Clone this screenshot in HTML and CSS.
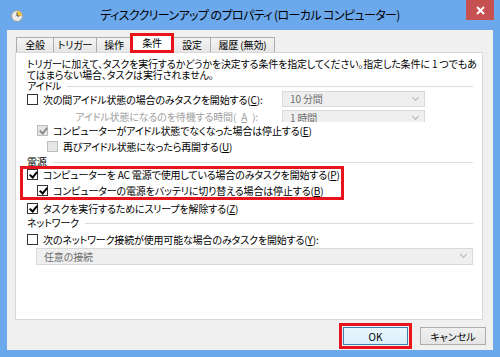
FILE: index.html
```html
<!DOCTYPE html>
<html lang="ja">
<head>
    <meta charset="UTF-8">
    <title>ディスククリーンアップ のプロパティ</title>
    <link rel="stylesheet" href="styles.css">
</head>
<body>
<div class="window">
    <div class="titlebar">
        <svg class="app-icon" width="12" height="12" viewBox="0 0 12 12">
            <circle cx="6" cy="6" r="5.5" fill="#ececec" stroke="#9c9c9c"/>
            <path d="M6 6 V1 A5 5 0 0 1 11 6 Z" fill="#f2c23a"/>
            <path d="M6 2.5 V6 H8.5" stroke="#555" fill="none"/>
        </svg>
        <div class="title">ディスククリーンアップ のプロパティ (ローカル コンピューター)</div>
        <div class="close">
            <svg width="9" height="9" viewBox="0 0 9 9"><path d="M1 1 L8 8 M8 1 L1 8" stroke="#fff" stroke-width="2"/></svg>
        </div>
    </div>

    <div class="client">
        <div class="tabs">
            <div class="tab">全般</div>
            <div class="tab">トリガー</div>
            <div class="tab">操作</div>
            <div class="tab active">条件</div>
            <div class="tab">設定</div>
            <div class="tab">履歴 (無効)</div>
        </div>

        <div class="panel">
            <p class="intro">トリガーに加えて、タスクを実行するかどうかを決定する条件を指定してください。指定した条件に 1 つでもあ<br>てはまらない場合、タスクは実行されません。</p>

            <div class="group">アイドル<span class="rule"></span></div>
            <div class="row">
                <div class="label-col">
                    <span class="cb"></span>
                    <span>次の間アイドル状態の場合のみタスクを開始する(<u>C</u>):</span>
                </div>
                <div class="combo">10 分間<span class="chev"></span></div>
            </div>
            <div class="row short">
                <div class="label-col right muted">アイドル状態になるのを待機する時間(<u>A</u>):</div>
                <div class="combo cut">1 時間<span class="chev"></span></div>
            </div>
            <div class="row indent1">
                <span class="cb off checked"></span>
                <span>コンピューターがアイドル状態でなくなった場合は停止する(<u>E</u>)</span>
            </div>
            <div class="row indent2">
                <span class="cb off"></span>
                <span>再びアイドル状態になったら再開する(<u>U</u>)</span>
            </div>

            <div class="group power">電源<span class="rule"></span></div>
            <div class="mark-box">
                <div class="row">
                    <span class="cb checked"></span>
                    <span>コンピューターを AC 電源で使用している場合のみタスクを開始する(<u>P</u>)</span>
                </div>
                <div class="row tall indent1">
                    <span class="cb checked"></span>
                    <span>コンピューターの電源をバッテリに切り替える場合は停止する(<u>B</u>)</span>
                </div>
            </div>
            <div class="row tall">
                <span class="cb checked"></span>
                <span>タスクを実行するためにスリープを解除する(<u>Z</u>)</span>
            </div>

            <div class="group">ネットワーク<span class="rule"></span></div>
            <div class="row net">
                <span class="cb"></span>
                <span>次のネットワーク接続が使用可能な場合のみタスクを開始する(<u>Y</u>):</span>
            </div>
            <div class="combo wide">任意の接続<span class="chev"></span></div>
        </div>

        <div class="footer">
            <div class="mark-ok"><button class="btn default">OK</button></div>
            <button class="btn">キャンセル</button>
        </div>
    </div>
</div>
</body>
</html>
```

FILE: styles.css
```css
* {
    box-sizing: border-box;
}
body {
    margin: 0;
    background-color: #6ca8ec;
    font-family: "Noto Sans CJK JP", sans-serif;
    font-feature-settings: "palt";
    font-size: 10px;
    letter-spacing: -0.15px;
    color: #000;
}
.window {
    width: 500px;
    height: 357px;
    display: flex;
    flex-direction: column;
}

/* title bar */
.titlebar {
    height: 30px;
    display: grid;
    grid-template-columns: 1fr auto 1fr;
    align-items: start;
}
.app-icon {
    margin: 10px 0 0 11px;
}
.title {
    font-size: 12px;
    letter-spacing: -0.6px;
    line-height: 30px;
    color: #000;
}
.close {
    justify-self: end;
    width: 28px;
    height: 20px;
    margin-right: 6px;
    background-color: #c75050;
    display: flex;
    align-items: center;
    justify-content: center;
}

/* client area */
.client {
    flex: 1;
    margin: 0 7px 7px;
    background-color: #f0f0f0;
    padding: 0 10px 0 8px;
    display: flex;
    flex-direction: column;
}
.tabs {
    height: 22px;
    display: flex;
    align-items: flex-end;
    padding-left: 1px;
}
.tab {
    height: 15px;
    line-height: 14px;
    text-align: center;
    border: 1px solid #acacac;
    border-bottom: none;
    margin-right: -1px;
    background: linear-gradient(#f4f4f4, #e6e6e6);
    white-space: nowrap;
}
.tab:nth-child(1) { width: 38px; }
.tab:nth-child(2) { width: 44px; }
.tab:nth-child(3) { width: 36px; }
.tab:nth-child(5) { width: 38px; }
.tab:nth-child(6) { width: 65px; }
.tab.active {
    width: 44px;
    height: 20px;
    line-height: 17px;
    margin: 0 -1px -1px -1px;
    background: #fff;
    position: relative;
    z-index: 1;
    outline: 3px solid #e8131b;
    outline-offset: -3px;
}
.panel {
    height: 268px;
    background-color: #fff;
    border: 1px solid #d9d9d9;
    padding: 5px 9px 0 11px;
}
.intro {
    margin: 0;
    line-height: 11px;
    white-space: nowrap;
}
.group {
    height: 11px;
    line-height: 11px;
    display: flex;
    align-items: center;
    gap: 6px;
}
.group .rule {
    flex: 1;
    border-top: 1px solid #dcdcdc;
    margin-top: 2px;
}
.group.power {
    margin-top: 2px;
}

/* rows */
.row {
    height: 16px;
    display: flex;
    align-items: center;
    gap: 5px;
    white-space: nowrap;
}
.row.tall {
    height: 17px;
}
.row:first-of-type {
    margin-top: 1px;
}
.row.short {
    height: 12px;
    margin-top: 3px;
    align-items: flex-start;
}
.row.short .label-col {
    line-height: 14px;
}
.row.indent1 {
    padding-left: 10px;
}
.row.indent2 {
    padding-left: 20px;
}
.row.net {
    margin-top: 3px;
}
.label-col {
    width: 250px;
    flex-shrink: 0;
    display: flex;
    align-items: center;
    gap: 5px;
}
.label-col.right {
    justify-content: flex-end;
    padding-right: 19px;
}
.muted {
    color: #a0a0a0;
}
u {
    text-decoration-thickness: 1px;
    text-underline-offset: 1px;
}

/* checkbox */
.cb {
    width: 11px;
    height: 11px;
    flex-shrink: 0;
    border: 1px solid #333;
    background-color: #fff;
    position: relative;
}
.cb.checked::after {
    content: "";
    position: absolute;
    left: 3px;
    top: 0;
    width: 3px;
    height: 6px;
    border: solid #000;
    border-width: 0 2px 2px 0;
    transform: rotate(40deg);
}
.cb.off {
    border-color: #bcbcbc;
    background-color: #e6e6e6;
}
.cb.off.checked::after {
    border-color: #8c8c8c;
}

/* annotation box */
.mark-box {
    width: 324px;
    margin: -1px 0 0 -7px;
    padding: 0 0 1px 7px;
    outline: 3px solid #e8131b;
    outline-offset: -3px;
}
.mark-box .row:first-of-type {
    margin-top: 0;
}

/* combo */
.combo {
    width: 143px;
    height: 16px;
    line-height: 14px;
    border: 1px solid #d9d9d9;
    background-color: #efefef;
    color: #6d6d6d;
    padding-left: 7px;
    position: relative;
    flex-shrink: 0;
}
.combo.cut {
    height: 12px;
    border-bottom: none;
    overflow: hidden;
}
.combo.wide {
    width: auto;
    height: 17px;
    line-height: 15px;
    margin: 1px 0 0 9px;
}
.chev {
    position: absolute;
    right: 6px;
    top: 3px;
    width: 5px;
    height: 5px;
    border: solid #b4b4b4;
    border-width: 0 1px 1px 0;
    transform: rotate(45deg);
}

/* footer */
.footer {
    margin: 7px -3px 0 0;
    display: flex;
    justify-content: flex-end;
    align-items: center;
    gap: 12px;
}
.btn {
    width: 66px;
    height: 18px;
    padding: 0;
    font-family: inherit;
    font-feature-settings: "palt";
    font-size: 10px;
    color: #000;
    border: 1px solid #adadad;
    background: linear-gradient(#f0f0f0, #e5e5e5);
}
.btn.default {
    width: 65px;
    border-color: #3c7fb1;
    background: linear-gradient(#eaf6fd, #d9f0fc);
}
.mark-ok {
    padding: 4px;
    margin: -4px -4px -4px 0;
    outline: 3px solid #e8131b;
    outline-offset: -3px;
    display: flex;
}
```
